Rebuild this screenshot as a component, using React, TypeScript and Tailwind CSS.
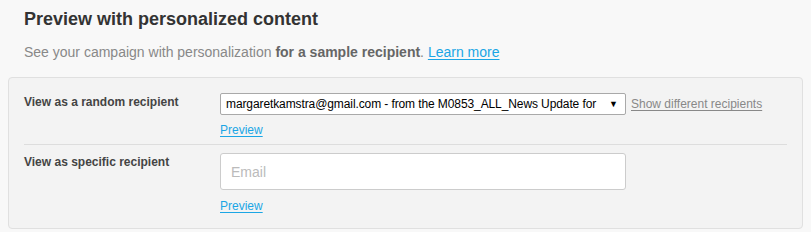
import React from "react";

function LinkText({ children, className = "" }: { children: React.ReactNode; className?: string }) {
  return (
    <a href="#" className={`underline underline-offset-2 ${className}`}>
      {children}
    </a>
  );
}

export default function App() {
  return (
    <div className="min-h-[232px] bg-[#f8f8f8] font-['Liberation_Sans',Arial,sans-serif] pt-[7px]">
      <h2 className="px-6 text-[18px] leading-[24px] font-bold text-[#333]">
        Preview with personalized content
      </h2>
      <p className="mt-[11px] px-6 text-[14px] leading-[20px] text-[#888]">
        See your campaign with personalization{" "}
        <span className="font-bold text-[#666]">for a sample recipient</span>.{" "}
        <LinkText className="text-[#1ba6e5]">Learn more</LinkText>
      </p>

      <div className="mx-2 mt-[15px] rounded-[4px] border border-[#e0e0e0] bg-[#f3f3f3] px-[15px]">
        <div className="grid grid-cols-[196px_1fr] pt-[15px] pb-[5px]">
          <div className="text-[12px] leading-[18px] font-bold text-[#444]">
            View as a random recipient
          </div>
          <div>
            <div className="flex items-center">
              <div className="flex h-[22px] w-[406px] items-center overflow-hidden rounded-[2px] border border-[#a9a9a9] bg-white pl-[5px] pr-[7px] text-[12px] text-black">
                <span className="min-w-0 flex-1 whitespace-nowrap tracking-[-0.1px]">
                  margaretkamstra@gmail.com - from the M0853_ALL_News Update for
                </span>
                <span className="ml-[4px] shrink-0 text-[9px] leading-none">▼</span>
              </div>
              <LinkText className="ml-[5px] text-[12px] text-[#888]">Show different recipients</LinkText>
            </div>
            <div className="mt-[6px] text-[12px] leading-[18px]">
              <LinkText className="text-[#1ba6e5]">Preview</LinkText>
            </div>
          </div>
        </div>

        <div className="h-px bg-[#dddddd]" />

        <div className="grid grid-cols-[196px_1fr] pt-[8px] pb-[13px]">
          <div className="text-[12px] leading-[18px] font-bold text-[#444]">
            View as specific recipient
          </div>
          <div>
            <input
              type="text"
              placeholder="Email"
              className="block h-[37px] w-[406px] rounded-[3px] border border-[#cccccc] bg-white px-[10px] text-[14px] text-[#333] outline-none placeholder:text-[#bbbbbb]"
            />
            <div className="mt-[7px] text-[12px] leading-[18px]">
              <LinkText className="text-[#1ba6e5]">Preview</LinkText>
            </div>
          </div>
        </div>
      </div>
    </div>
  );
}
